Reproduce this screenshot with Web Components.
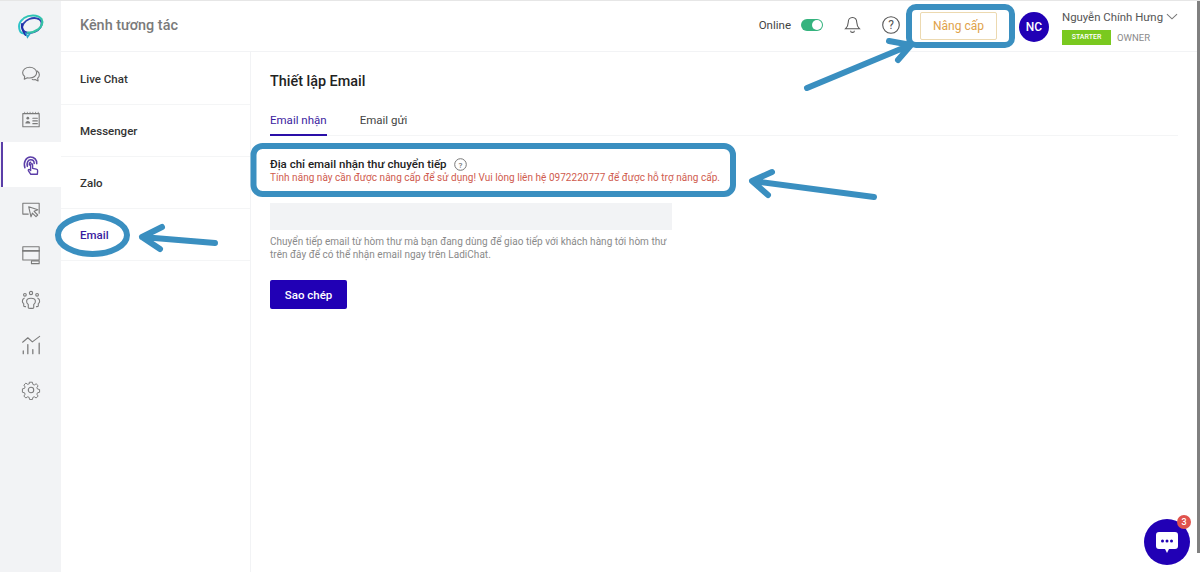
<!DOCTYPE html>
<html lang="vi">
<head>
<meta charset="utf-8">
<title>Thiết lập Email</title>
<style>
  html, body { margin: 0; height: 100%; background: #fff; overflow: hidden; }
  body { font-family: Roboto, "Liberation Sans", sans-serif; }
</style>
</head>
<body>
<chat-app></chat-app>

<script>
const icons = {
  chat: `<path d="M9.500 2.500c-4.300 0-7.700 2.600-7.700 5.900 0 1.700.9 3.100 2.300 4.200l-.5 3 3.400-1.600c.8.200 1.600.300 2.500.300 4.300 0 7.700-2.600 7.700-5.900s-3.400-5.900-7.700-5.900z"/><path d="M17.700 6.500c1.500.9 2.500 2.400 2.500 4.200 0 1.500-.7 2.800-1.900 3.700l.5 3.100-3.200-1.500c-1.100.3-2.200.2-3.200-.1"/>`,
  contact: `<rect x="2" y="4" width="18" height="14.500"/><path d="M4 4V2.500M7 4V2.500M10 4V2.500M13 4V2.500M16 4V2.500M19 4V2.500" stroke-width=".8"/><circle cx="7.500" cy="9" r="1.500" fill="currentColor" stroke="none"/><path d="M4.800 14.800c0-1.800 1.200-2.800 2.700-2.800s2.700 1 2.700 2.800z" fill="currentColor" stroke="none"/><path d="M13 9h5M13 12h5M13 15h5"/>`,
  touch: `<path d="M4.300 14C2.300 8 5.500 2.200 10.500 2.200c4.300 0 7 3.100 6.800 7.300" stroke-width="1.700"/><path d="M7 12.500C6 8.500 7.800 5.300 10.700 5.300c2.400 0 3.800 1.700 3.800 4" stroke-width="1.700"/><path d="M9.200 11c-.2-1.800.4-2.900 1.500-2.900" stroke-width="1.700"/><path d="M10.800 21.200l-2.600-3.800c-.7-1.100.6-2.100 1.500-1.200l.9 1v-6.400c0-1.500 2.200-1.500 2.200 0v3.900l4 .8c1 .2 1.600 1 1.500 2l-.3 3.700z" fill="#fff" stroke-width="1.500"/>`,
  cursor: `<path d="M8 15.500H2V3.500h18v11"/><path d="M8.500 7.500l10 3.300-4.100 1.700 4 4-1.900 1.900-4-4-1.500 4.100z" fill="#f2f3f5"/>`,
  card: `<rect x="2" y="2" width="18" height="14.500"/><path d="M2 6.500h18" stroke-width="1.800"/><rect x="11.500" y="17.500" width="8.500" height="3"/>`,
  team: `<circle cx="11" cy="3.300" r="1.800"/><circle cx="4.300" cy="5.300" r="1.500"/><circle cx="17.700" cy="5.300" r="1.500"/><path d="M8 19.500v-3.500c-1.500-1-2-2.500-1.800-4 .2-1.900 2.300-3 4.800-3s4.600 1.100 4.800 3c.2 1.500-.3 3-1.800 4v3.500c0 1-6 1-6 0z"/><path d="M3.500 9C2 9.500 1.500 11 1.500 12.500c0 1 .5 2 1.500 2.500v2.500c0 .5 1 .8 2 .8"/><path d="M18.500 9c1.500.5 2 2 2 3.500 0 1-.5 2-1.500 2.500v2.500c0 .5-1 .8-2 .8"/>`,
  chart: `<path d="M1.800 8L7.500 3l5 4.500 8-6"/><path d="M2.500 20.500v-3M7.500 20.500V10.500M13 20.500v-4.500M20 20.500V9" stroke-width="1.400"/>`,
  gear: `<circle cx="11" cy="11" r="3"/><path d="M9.300 1.500h3.400l.6 2.700 1.700.7 2.300-1.500 2.400 2.400-1.500 2.300.7 1.700 2.600.6v3.400l-2.600.6-.7 1.700 1.500 2.300-2.400 2.400-2.300-1.500-1.700.7-.6 2.700H9.300l-.6-2.700-1.700-.7-2.300 1.500-2.400-2.400 1.500-2.300-.7-1.700-2.600-.6V9.600l2.600-.6.7-1.700-1.500-2.300 2.400-2.400L7 4.100l1.700-.7z" transform="translate(1.100 1.100) scale(.9)"/>`
};

function defineElement(name, css, markup) {
  customElements.define(name, class extends HTMLElement {
    constructor() {
      super();
      this.attachShadow({ mode: "open" }).innerHTML = `<style>${css}</style>${markup(this)}`;
    }
  });
}

defineElement("nav-icon", `
  :host { display: flex; height: 45px; align-items: center; justify-content: center; color: #7b7b7b; box-sizing: border-box; }
  :host([active]) { background: #fff; color: #5b3ea8; border-left: 2px solid #5b3ea8; margin-left: 1px; padding-right: 3px; }
  svg { width: 20px; height: 20px; fill: none; stroke: currentColor; stroke-width: 1.200; stroke-linejoin: round; stroke-linecap: round; }
`, el => `<svg viewBox="0 0 22 22">${icons[el.getAttribute("icon")]}</svg>`);

defineElement("app-sidebar", `
  :host { display: flex; flex-direction: column; width: 61px; flex: none; background: #f2f3f5; }
  .logo { display: flex; height: 51px; align-items: center; justify-content: center; box-sizing: border-box; }
`, () => `
  <div class="logo">
    <svg width="28" height="26" viewBox="0 0 28 26" fill="none" stroke-linecap="round">
      <path d="M6 5C2 8 1.500 13 3 17c1 2.500 3 3 6.500 2.500" stroke="#2fc4c9" stroke-width="2"/>
      <path d="M7 4c5-3.500 14-3.500 17 .5" stroke="#2fc4b4" stroke-width="2"/>
      <ellipse cx="15" cy="11.500" rx="10" ry="7" transform="rotate(-22 15 11.500)" stroke="#2b3fb0" stroke-width="1.800"/>
      <path d="M24.500 5c2 3.500 0 8-3.500 10.500-3 2-7 3.500-10 3" stroke="#35c2a4" stroke-width="2.200"/>
      <path d="M5 10c-.5 3 .5 7 3.500 11" stroke="#1f2fa8" stroke-width="2"/>
      <path d="M9 19l1.500 4 2.500-3.500" stroke="#2aa7c9" stroke-width="1.600"/>
    </svg>
  </div>
  <nav-icon icon="chat"></nav-icon>
  <nav-icon icon="contact"></nav-icon>
  <nav-icon icon="touch" active></nav-icon>
  <nav-icon icon="cursor"></nav-icon>
  <nav-icon icon="card"></nav-icon>
  <nav-icon icon="team"></nav-icon>
  <nav-icon icon="chart"></nav-icon>
  <nav-icon icon="gear"></nav-icon>
`);

defineElement("top-bar", `
  :host { display: flex; height: 51px; flex: none; align-items: center; box-sizing: border-box; padding: 0 22px 2px 19px; border-bottom: 1px solid #f2f3f5; }
  h1 { margin: 0; font-size: 14.400px; font-weight: 500; color: #7a7a7a; flex: 1; }
  .online { font-size: 11.500px; color: #444; margin-right: 10px; }
  .switch { width: 22px; height: 12px; border-radius: 6px; background: #35b37e; position: relative; margin-right: 21px; }
  .switch::after { content: ""; position: absolute; right: 1px; top: 1px; width: 10px; height: 10px; border-radius: 50%; background: #fff; }
  svg { fill: none; stroke: #555; stroke-width: 1.100; display: block; }
  .bell { margin-right: 21px; }
  .upgrade { width: 77px; height: 28px; box-sizing: border-box; margin: 2px 22px 0 20px; border: 1px solid #ecd9b0; border-radius: 2px; font-size: 12px; font-weight: 400; color: #e0a24a; display: flex; align-items: center; justify-content: center; }
  .avatar { width: 30px; height: 30px; border-radius: 50%; background: #2100b5; color: #fff; font-size: 12px; font-weight: 500; display: flex; align-items: center; justify-content: center; margin: 4px 13px 0 0; }
  .user { display: flex; flex-direction: column; gap: 6px; width: 116px; margin-top: 4px; }
  .name { display: flex; align-items: center; gap: 3px; font-size: 11.400px; color: #555; white-space: nowrap; }
  .meta { display: flex; align-items: center; gap: 6px; font-size: 9.500px; color: #8a8a8a; }
  .plan { width: 49px; height: 15px; background: #7ac91f; color: #fff; font-size: 7px; font-weight: 500; display: flex; align-items: center; justify-content: center; }
`, () => `
  <h1>Kênh tương tác</h1>
  <span class="online">Online</span>
  <span class="switch"></span>
  <svg class="bell" width="17" height="18" viewBox="0 0 18 19"><path d="M9 1.500c-3 0-4.500 2.200-4.500 5 0 4-1.500 5.500-3 7h15c-1.500-1.500-3-3-3-7 0-2.800-1.500-5-4.500-5zM7 15.500c0 2.400 4 2.400 4 0"/></svg>
  <svg width="18" height="18" viewBox="0 0 18 18"><circle cx="9" cy="9" r="8.300"/><text x="9" y="13" text-anchor="middle" font-family="Roboto, sans-serif" font-size="12" fill="#555" stroke="none">?</text></svg>
  <span class="upgrade">Nâng cấp</span>
  <span class="avatar">NC</span>
  <div class="user">
    <div class="name">Nguyễn Chính Hưng
      <svg width="13" height="7" viewBox="0 0 13 7"><path d="M1 1l5.500 5L12 1" stroke="#777"/></svg>
    </div>
    <div class="meta"><span class="plan">STARTER</span><span>OWNER</span></div>
  </div>
`);

defineElement("channel-item", `
  :host { display: flex; height: 52px; align-items: center; box-sizing: border-box; padding: 1px 0 0 19px; border-bottom: 1px solid #f4f5f6; font-size: 11.500px; font-weight: 500; color: #333; }
  :host([active]) { color: #3a1ca0; }
`, () => `<slot></slot>`);

defineElement("channel-list", `
  :host { display: block; width: 190px; flex: none; box-sizing: border-box; padding-top: 1px; border-right: 1px solid #f2f3f5; }
`, () => `<slot></slot>`);

defineElement("email-settings", `
  :host { display: block; flex: 1; padding: 22px 22px 0 19px; color: #222; }
  h2 { margin: 0; font-size: 14.400px; font-weight: 500; line-height: 16px; color: #222; }
  .tabs { display: flex; gap: 33px; margin-top: 22px; border-bottom: 1px solid #f4f5f6; }
  .tab { font-size: 11.500px; height: 23px; line-height: 16px; box-sizing: border-box; color: #444; }
  .tab.on { color: #3a1ca0; border-bottom: 2px solid #2a0fa8; margin-bottom: -1px; height: 24px; }
  .label { display: flex; align-items: center; gap: 7px; margin-top: 21px; font-size: 11.500px; font-weight: 500; line-height: 14px; color: #222; }
  .label svg { fill: none; stroke: #777; }
  .error { font-size: 10px; line-height: 14px; color: #cf5b4e; letter-spacing: .03px; white-space: nowrap; }
  .field { width: 402px; height: 27px; background: #f2f3f5; margin-top: 18px; }
  .hint { width: 402px; margin-top: 5px; font-size: 10px; line-height: 13px; color: #8a8a8a; letter-spacing: .03px; }
  button { display: block; width: 77px; height: 29px; margin-top: 19px; border: 0; border-radius: 2px; background: #2100b5; color: #fff; font: 500 11.500px Roboto, sans-serif; }
`, () => `
  <h2>Thiết lập Email</h2>
  <div class="tabs"><span class="tab on">Email nhận</span><span class="tab">Email gửi</span></div>
  <div class="label">Địa chỉ email nhận thư chuyển tiếp
    <svg width="13" height="13" viewBox="0 0 13 13"><circle cx="6.500" cy="6.500" r="5.800"/><text x="6.500" y="9.500" text-anchor="middle" font-family="Roboto, sans-serif" font-size="8" fill="#777" stroke="none">?</text></svg>
  </div>
  <div class="error">Tính năng này cần được nâng cấp để sử dụng! Vui lòng liên hệ 0972220777 để được hỗ trợ nâng cấp.</div>
  <div class="field"></div>
  <div class="hint">Chuyển tiếp email từ hòm thư mà bạn đang dùng để giao tiếp với khách hàng tới hòm thư trên đây để có thể nhận email ngay trên LadiChat.</div>
  <button>Sao chép</button>
`);

defineElement("chat-bubble", `
  :host { position: absolute; left: 1144px; top: 518px; width: 46px; height: 46px; border-radius: 50%; background: #2100b5; display: flex; align-items: center; justify-content: center; }
  .badge { position: absolute; right: -1px; top: -4px; width: 14px; height: 14px; border-radius: 50%; background: #e0524d; color: #fff; font-size: 9px; font-weight: 500; display: flex; align-items: center; justify-content: center; }
`, () => `
  <svg width="24" height="23" viewBox="0 0 24 23"><path d="M4 1h16a3 3 0 0 1 3 3v11a3 3 0 0 1-3 3h-6l-2 4-2-4H4a3 3 0 0 1-3-3V4a3 3 0 0 1 3-3z" fill="#fff"/><circle cx="7.500" cy="10" r="1.500" fill="#2100b5"/><circle cx="12" cy="10" r="1.500" fill="#2100b5"/><circle cx="16.500" cy="10" r="1.500" fill="#2100b5"/></svg>
  <span class="badge">3</span>
`);

// the blue marker strokes drawn over the screenshot
defineElement("call-outs", `
  :host { position: absolute; left: 0; top: -1px; width: 1200px; height: 572px; pointer-events: none; }
  svg { display: block; fill: none; stroke: #3a8fc0; stroke-width: 6px; stroke-linecap: round; stroke-linejoin: round; }
`, () => `
  <svg width="1200" height="572" viewBox="0 0 1200 572">
    <rect x="909" y="7" width="103" height="38" rx="7"/>
    <rect x="253.500" y="146" width="479.500" height="48" rx="9"/>
    <ellipse cx="92.500" cy="235" rx="34.500" ry="19"/>
    <path d="M807 88L908 46M889 41L911 45L898 60"/>
    <path d="M874 197L752 181M772 172L752 181L768 195"/>
    <path d="M215 243L142 237M162 227L142 237L160 249"/>
  </svg>
`);

defineElement("chat-app", `
  :host { display: flex; position: relative; width: 1200px; height: 572px; overflow: hidden; box-sizing: border-box; border-top: 1px solid #e6e6e6; }
  .main { display: flex; flex-direction: column; flex: 1; min-width: 0; }
  .body { display: flex; flex: 1; min-height: 0; }
  .edge { position: absolute; right: 0; top: 0; height: 552px; width: 3px; background: #808080; }
`, () => `
  <app-sidebar></app-sidebar>
  <div class="main">
    <top-bar></top-bar>
    <div class="body">
      <channel-list>
        <channel-item>Live Chat</channel-item>
        <channel-item>Messenger</channel-item>
        <channel-item>Zalo</channel-item>
        <channel-item active>Email</channel-item>
      </channel-list>
      <email-settings></email-settings>
    </div>
  </div>
  <span class="edge"></span>
  <chat-bubble></chat-bubble>
  <call-outs></call-outs>
`);
</script>
</body>
</html>
